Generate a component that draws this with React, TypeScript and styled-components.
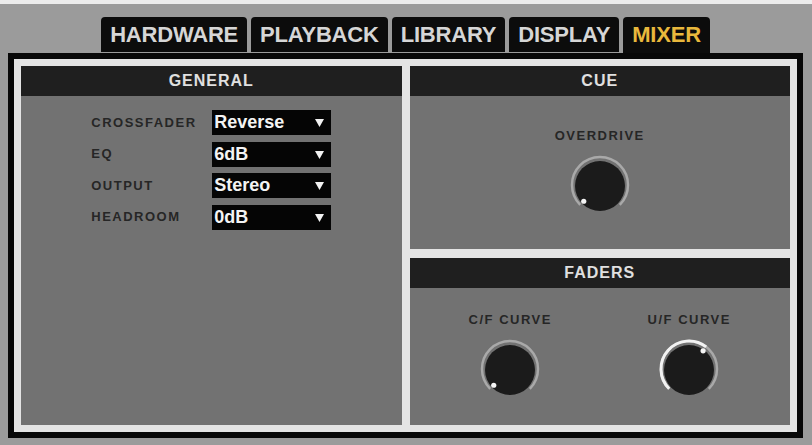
import styled, { createGlobalStyle } from "styled-components";

const GlobalStyle = createGlobalStyle`
	html, body {
		margin: 0;
		padding: 0;
		background: #9b9b9b;
		font-family: "Liberation Sans", Arial, sans-serif;
	}
	* {
		box-sizing: border-box;
	}
`;

const tabs = ["HARDWARE", "PLAYBACK", "LIBRARY", "DISPLAY", "MIXER"];

const generalRows = [
	{ label: "CROSSFADER", value: "Reverse" },
	{ label: "EQ", value: "6dB" },
	{ label: "OUTPUT", value: "Stereo" },
	{ label: "HEADROOM", value: "0dB" },
];

const polar = (cx: number, cy: number, r: number, deg: number) => {
	const a = (deg * Math.PI) / 180;
	return [cx + r * Math.sin(a), cy - r * Math.cos(a)];
};

const arc = (cx: number, cy: number, r: number, from: number, to: number) => {
	const [x1, y1] = polar(cx, cy, r, from);
	const [x2, y2] = polar(cx, cy, r, to);
	const large = to - from > 180 ? 1 : 0;
	return `M ${x1} ${y1} A ${r} ${r} 0 ${large} 1 ${x2} ${y2}`;
};

// value 0..1, min at 7:30, max at 4:30
const Knob = ({ value }: { value: number }) => {
	const angle = -135 + value * 270;
	const [dx, dy] = polar(31, 31, 23, angle);
	return (
		<svg width="62" height="62" viewBox="0 0 62 62">
			<path d={arc(31, 31, 28, -135, 135)} fill="none" stroke="#a9a9a9" strokeWidth="2.5" />
			{value > 0.02 && (
				<path d={arc(31, 31, 28, -135, angle)} fill="none" stroke="#f2f2f2" strokeWidth="3" />
			)}
			<circle cx="31" cy="32" r="25" fill="#1b1b1b" />
			<circle cx={dx} cy={dy} r="2.6" fill="#f4f4f4" />
		</svg>
	);
};

export default function App() {
	return (
		<>
			<GlobalStyle />
			<Page>
				<TabBar>
					{tabs.map((t) => (
						<Tab key={t} active={t === "MIXER"}>
							{t}
						</Tab>
					))}
				</TabBar>
				<Frame>
					<Panel>
						<Header>GENERAL</Header>
						<GeneralBody>
							<Form>
								{generalRows.map((row) => (
									<FormRow key={row.label}>
										<Label>{row.label}</Label>
										<Select>
											<span>{row.value}</span>
											<svg width="9" height="9" viewBox="0 0 9 9">
												<path d="M0 1 H9 L4.5 9 Z" fill="#f2f2f2" />
											</svg>
										</Select>
									</FormRow>
								))}
							</Form>
						</GeneralBody>
					</Panel>
					<RightColumn>
						<Panel height={183}>
							<Header>CUE</Header>
							<KnobBody>
								<KnobGroup>
									<Label>OVERDRIVE</Label>
									<Knob value={0} />
								</KnobGroup>
							</KnobBody>
						</Panel>
						<Panel>
							<Header>FADERS</Header>
							<KnobBody>
								<KnobGroup>
									<Label>C/F CURVE</Label>
									<Knob value={0} />
								</KnobGroup>
								<KnobGroup>
									<Label>U/F CURVE</Label>
									<Knob value={0.64} />
								</KnobGroup>
							</KnobBody>
						</Panel>
					</RightColumn>
				</Frame>
			</Page>
		</>
	);
}

const Page = styled.div`
	width: 812px;
	height: 445px;
	border-top: 4px solid #ececec;
	padding: 13px 9px 7px 8px;
	display: flex;
	flex-direction: column;
`;

const TabBar = styled.div`
	display: flex;
	justify-content: center;
	align-items: flex-start;
	gap: 4px;
	height: 36px;
`;

const Tab = styled.div<{ active?: boolean }>`
	height: ${({ active }) => (active ? "36px" : "35px")};
	padding: 0 9px;
	background: #0c0c0c;
	border-radius: 4px 4px 0 0;
	color: ${({ active }) => (active ? "#e9b83c" : "#d6d6d6")};
	font-size: 22px;
	font-weight: 700;
	line-height: 35px;
	letter-spacing: -0.2px;
`;

const Frame = styled.div`
	flex: 1;
	border: 6px solid #080808;
	background: #e4e4e4;
	padding: 7px;
	display: grid;
	grid-template-columns: 1fr 1fr;
	gap: 8px;
`;

const RightColumn = styled.div`
	display: flex;
	flex-direction: column;
	gap: 9px;
`;

const Panel = styled.div<{ height?: number }>`
	background: #727272;
	display: flex;
	flex-direction: column;
	${({ height }) => (height ? `height: ${height}px;` : "flex: 1;")}
`;

const Header = styled.div`
	height: 30px;
	background: #1f1f1f;
	color: #e0e0e0;
	font-size: 16px;
	font-weight: 700;
	letter-spacing: 1px;
	display: flex;
	align-items: center;
	justify-content: center;
`;

const GeneralBody = styled.div`
	padding-top: 14px;
	display: flex;
	justify-content: center;
`;

const Form = styled.div`
	display: flex;
	flex-direction: column;
	gap: 6.5px;
`;

const FormRow = styled.div`
	display: grid;
	grid-template-columns: 121px 119px;
	align-items: center;
	height: 25px;
`;

const Label = styled.div`
	color: #262626;
	font-size: 13px;
	font-weight: 700;
	letter-spacing: 1.5px;
	line-height: 14px;
	white-space: nowrap;
`;

const Select = styled.div`
	height: 25px;
	background: #050505;
	color: #f4f4f4;
	font-size: 18px;
	font-weight: 700;
	padding: 0 7px 0 2px;
	display: flex;
	align-items: center;
	justify-content: space-between;
`;

const KnobBody = styled.div`
	flex: 1;
	display: flex;
	justify-content: center;
	align-items: center;
	gap: 79px;
`;

const KnobGroup = styled.div`
	width: 100px;
	display: flex;
	flex-direction: column;
	align-items: center;
	gap: 11px;
`;
